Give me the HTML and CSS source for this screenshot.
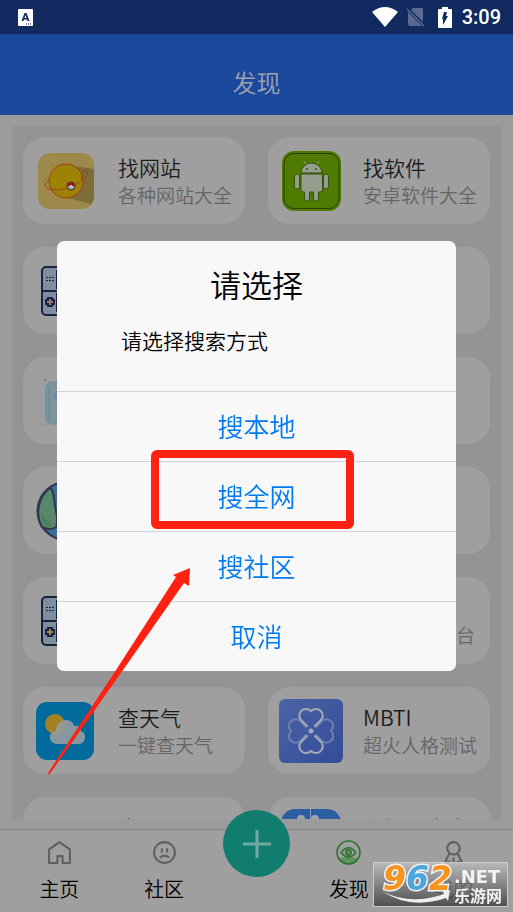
FILE: index.html
```html
<!DOCTYPE html>
<html lang="zh-CN">
<head>
    <meta charset="UTF-8">
    <meta name="viewport" content="width=device-width, initial-scale=1">
    <title>发现</title>
    <link rel="stylesheet" href="styles.css">
</head>
<body>
<div class="statusbar">
    <svg class="status_app" width="16" height="17" viewBox="0 0 16 17">
        <rect width="15" height="17" rx="1" fill="#fff"/>
        <path d="M3.500 12L6.500 4H8.500L11.500 12H9.500L9 10.500H6L5.500 12ZM6.500 9H8.500L7.500 6Z" fill="#112a5f" fill-rule="evenodd"/>
        <path d="M8 15H14" stroke="#112a5f" stroke-width="1" stroke-dasharray="1 1"/>
    </svg>
    <svg width="26" height="20" viewBox="0 0 26 20">
        <path d="M0 5Q13 -5 26 5L13 20Z" fill="#fff"/>
    </svg>
    <svg class="status_sim" width="20" height="20" viewBox="0 0 20 20">
        <path d="M7 1H16Q17 1 17 2V15L5 3ZM2 5L16 19H4Q2 19 2 17Z" fill="#5a6b92"/>
        <path d="M1 2L18 19" stroke="#5a6b92" stroke-width="1.500"/>
    </svg>
    <svg class="status_battery" width="14" height="21" viewBox="0 0 14 21">
        <path d="M4 0H10V2H13Q14 2 14 3V20Q14 21 13 21H1Q0 21 0 20V3Q0 2 1 2H4Z" fill="#fff"/>
        <path d="M6 5H9L8 9H10L5 18V12H4Z" fill="#112a5f"/>
    </svg>
    <span class="time">3:09</span>
</div>

<header class="header">
    <h1>发现</h1>
</header>

<main class="content">
    <div class="panel">
        <a class="card" href="#">
            <svg class="card_icon" viewBox="0 0 64 64">
                <rect x="4" y="4" width="56" height="56" rx="12" fill="#9d8a4b"/>
                <path d="M40 17L60 20V48Q60 52 57 55L34 49Z" fill="#7e6c39"/>
                <circle cx="32" cy="32" r="17" fill="#9d8305" stroke="#9f401d" stroke-width="1"/>
                <path d="M48 31C46 24 50 20 53 22C56 26 49 31 42 35C35 40 24 42 16 40C11 40 9 33 15 32" fill="none" stroke="#9f401d" stroke-width="1"/>
                <circle cx="37" cy="37" r="4" fill="#b0b0b0" stroke="#3c2020" stroke-width="1"/>
                <path d="M33 37A4 4 0 0 1 41 37Z" fill="#8f2222"/>
                <circle cx="37" cy="37" r="1" fill="#ddd"/>
            </svg>
            <span class="card_text">
                <span class="card_title">找网站</span>
                <span class="card_desc">各种网站大全</span>
            </span>
        </a>
        <a class="card" href="#">
            <svg class="card_icon" viewBox="0 0 64 64">
                <rect x="3" y="2" width="59" height="60" rx="12" fill="#4f7c00"/>
                <rect x="5" y="4.500" width="55" height="55" rx="10" fill="none" stroke="#243f00" stroke-width="1"/>
                <g fill="#969c8e" stroke="#33530a" stroke-width="1">
                    <path d="M25 12L28 17M40 12L37 17" stroke="#969c8e"/>
                    <path d="M22 24A10.500 10 0 0 1 43 24Z"/>
                    <path d="M22 25H43.500V41Q43.500 43 41 43H39.500V50Q39 52 37 52Q35 52 34.500 50V43H30.500V50Q30 52 28 52Q26 52 25.500 50V43H24Q22 43 22 41Z"/>
                    <rect x="15.500" y="25" width="5" height="15" rx="2.500"/>
                    <rect x="44.500" y="25" width="5" height="15" rx="2.500"/>
                </g>
                <circle cx="28" cy="20" r="1" fill="#33530a"/>
                <circle cx="37" cy="20" r="1" fill="#33530a"/>
            </svg>
            <span class="card_text">
                <span class="card_title">找软件</span>
                <span class="card_desc">安卓软件大全</span>
            </span>
        </a>

        <a class="card" href="#">
            <svg class="card_icon" viewBox="0 0 64 64">
                <g stroke="#1d2145" stroke-width="2">
                    <rect x="8" y="8" width="48" height="48" rx="4" fill="#7d8f9d"/>
                    <path d="M8 32H56"/>
                    <rect x="23" y="12" width="29" height="17" fill="#66788a"/>
                    <rect x="23" y="35" width="29" height="17" fill="#66788a"/>
                    <path d="M14 39H18V41H20V45H18V47H14V45H12V41H14Z" fill="#94806a"/>
                </g>
                <path d="M12 18.500H20M12 21.500H20" stroke="#1d2145" stroke-dasharray="2 1"/>
            </svg>
        </a>
        <a class="card" href="#"></a>

        <a class="card" href="#">
            <svg class="card_icon" viewBox="0 0 64 64">
                <rect x="12" y="13" width="40" height="42" rx="6" fill="#80939d" stroke="#6688a0"/>
                <path d="M15 17V51" stroke="#718b9a" stroke-width="2"/>
                <path d="M20 27L28 38M20 27L25 22" fill="none" stroke="#668ca3" stroke-width="2"/>
                <path d="M5 55H14" stroke="#84939b"/>
                <circle cx="11" cy="11" r="1" fill="#747474"/>
            </svg>
        </a>
        <a class="card" href="#"></a>

        <a class="card" href="#">
            <svg class="card_icon" viewBox="0 0 64 64">
                <circle cx="32.500" cy="32" r="29" fill="#3e6d96" stroke="#343650" stroke-width="2"/>
                <path d="M16 9C20 11 20 20 21 27C22 34 25 40 22 48C18 51 12 50 8 48C1 35 4 18 16 9Z" fill="#58886a" stroke="#343650" stroke-width="2"/>
                <path d="M7 35Q11 37 12 41Q18 42 18 47Q12 48 9 45Z" fill="#4d7d5d"/>
            </svg>
        </a>
        <a class="card" href="#"></a>

        <a class="card" href="#">
            <svg class="card_icon" viewBox="0 0 64 64">
                <g stroke="#16233b" stroke-width="2">
                    <rect x="8" y="8" width="48" height="48" rx="4" fill="#7d8f9d"/>
                    <path d="M8 32H56"/>
                    <rect x="23" y="12" width="29" height="17" fill="#66788a"/>
                    <rect x="23" y="35" width="29" height="17" fill="#66788a"/>
                    <path d="M14 39H18V41H20V45H18V47H14V45H12V41H14Z" fill="#a18b4c"/>
                </g>
                <path d="M12 18.500H20M12 21.500H20" stroke="#16233b" stroke-dasharray="2 1"/>
            </svg>
        </a>
        <a class="card card_right" href="#">
            <span class="card_text">
                <span class="card_title"></span>
                <span class="card_desc">台</span>
            </span>
        </a>

        <a class="card" href="#">
            <svg class="card_icon" viewBox="0 0 64 64">
                <rect x="2" y="3" width="58" height="58" rx="11" fill="#006a9d"/>
                <circle cx="21" cy="25" r="10" fill="#a38223"/>
                <path d="M24 45C14 45 13 33 22 32C22 19 38 18 40 27C45 26 47 29 47 32C54 35 51 45 45 45Z" fill="#8797a0"/>
                <path d="M22 32C22 27 25 23 30 22Q33 30 24 35Q21 36 19 34Z" fill="#9a9b88"/>
            </svg>
            <span class="card_text">
                <span class="card_title">查天气</span>
                <span class="card_desc">一键查天气</span>
            </span>
        </a>
        <a class="card" href="#">
            <svg class="card_icon" viewBox="0 0 64 64">
                <defs>
                    <linearGradient id="mbti" x1="0" y1="0" x2="1" y2="1">
                        <stop offset="0" stop-color="#4b64a4"/>
                        <stop offset="1" stop-color="#344b99"/>
                    </linearGradient>
                    <path id="petal" d="M28 27L22 21C18 16 22 10 27 10Q30 10 32 12Q34 10 37 10C42 10 46 16 42 21L36 27" fill="none" stroke-width="2" stroke-linecap="round"/>
                </defs>
                <rect width="64" height="64" rx="6" fill="url(#mbti)"/>
                <g stroke="#7080b0">
                    <use href="#petal" transform="rotate(90 32 32)"/>
                    <use href="#petal" transform="rotate(-90 32 32)"/>
                </g>
                <g stroke="#a5a9b8">
                    <use href="#petal"/>
                    <use href="#petal" transform="rotate(180 32 32)"/>
                </g>
                <circle cx="32" cy="32" r="2.500" fill="#a5a9b8"/>
            </svg>
            <span class="card_text">
                <span class="card_title">MBTI</span>
                <span class="card_desc">超火人格测试</span>
            </span>
        </a>

        <a class="card" href="#">
            <span class="card_icon"></span>
            <span class="card_text">
                <span class="card_title">去豆</span>
                <span class="card_desc"></span>
            </span>
        </a>
        <a class="card" href="#">
            <svg class="card_icon" viewBox="0 0 64 64">
                <rect x="2" y="0" width="60" height="60" rx="14" fill="#2c5ea3"/>
                <path d="M31.500 0V60" stroke="#8e9db3"/>
                <circle cx="22" cy="10" r="4" fill="#a0a5ac"/>
                <circle cx="36" cy="10" r="4" fill="#a0a5ac"/>
            </svg>
            <span class="card_text">
                <span class="card_title">小知识大全</span>
                <span class="card_desc"></span>
            </span>
        </a>
    </div>
</main>

<nav class="tabbar">
    <a class="tab" href="#">
        <svg class="tab_icon" viewBox="0 0 24 24">
            <path d="M2 9L12 2L22 9V22H15V15.500H10V22H2Z" fill="none" stroke="#606060" stroke-width="2" stroke-linejoin="round"/>
        </svg>
        <span>主页</span>
    </a>
    <a class="tab" href="#">
        <svg class="tab_icon" viewBox="0 0 24 24" fill="none" stroke="#606060" stroke-width="2">
            <circle cx="12" cy="12" r="10"/>
            <path d="M9.500 8V12M14.500 8V12"/>
            <path d="M7.500 17Q12 13 16.500 17"/>
        </svg>
        <span>社区</span>
    </a>
    <button class="add_button" aria-label="发布">
        <svg width="28" height="28" viewBox="0 0 28 28">
            <path d="M14 0V28M0 14H28" stroke="#6fa99f" stroke-width="3"/>
        </svg>
    </button>
    <a class="tab" href="#">
        <svg class="tab_icon" viewBox="0 0 24 24">
            <path d="M2 17H22Q18 24 12 24Q6 24 2 17Z" fill="#5d925d"/>
            <g fill="none" stroke="#2b702e" stroke-width="1.500">
                <circle cx="12" cy="12" r="11"/>
                <path d="M5 12Q12 3 19 12Q12 21 5 12Z"/>
                <circle cx="12" cy="12" r="2.500"/>
            </g>
            <circle cx="12" cy="12" r="1" fill="#2b702e"/>
        </svg>
        <span>发现</span>
    </a>
    <a class="tab" href="#">
        <svg class="tab_icon" viewBox="0 0 24 24" fill="none" stroke="#606060" stroke-width="2">
            <circle cx="12" cy="8" r="6"/>
            <path d="M8 13L4 21H9M16 13L20 21H15M12 17V22" stroke-linejoin="round"/>
        </svg>
        <span>我的</span>
    </a>
</nav>

<div class="dialog_wrap">
    <div class="dialog" role="dialog" aria-labelledby="dialog_title">
        <div class="dialog_head">
            <h2 id="dialog_title">请选择</h2>
            <p>请选择搜索方式</p>
        </div>
        <button class="dialog_button">搜本地</button>
        <button class="dialog_button marked">搜全网</button>
        <button class="dialog_button">搜社区</button>
        <button class="dialog_button">取消</button>
        <svg class="arrow" width="143" height="207" viewBox="0 0 143 207">
            <path d="M142 0L141 18L136 15L75 102L1 207L0 205L68 102L128 9L125 7Z" fill="#ff2112"/>
        </svg>
    </div>
</div>

<div class="badge">
    <svg class="badge_swoosh" width="68" height="14" viewBox="0 0 68 14">
        <path d="M0 1Q28 16 62 4L61 1L68 0L66 11L64 8Q28 20 0 1Z" fill="#eee"/>
    </svg>
    <span class="badge_number"><span>9</span><span class="blue">6</span><span>2</span></span>
    <span class="badge_side">
        <span class="badge_net">.NET</span>
        <span class="badge_name">乐游网</span>
    </span>
</div>
</body>
</html>
```

FILE: styles.css
```css
* {
    box-sizing: border-box;
}

body {
    margin: 0;
    height: 100vh;
    display: flex;
    flex-direction: column;
    overflow: hidden;
    background: #9b9b9b;
    font-family: "Noto Sans CJK SC", sans-serif;
    font-weight: 350;
}

a {
    color: inherit;
    text-decoration: none;
}

button {
    border: 0;
    padding: 0;
    font-family: inherit;
    font-weight: inherit;
    cursor: pointer;
}

.statusbar {
    display: flex;
    align-items: center;
    height: 34px;
    padding: 0 12px 0 18px;
    background: #112a5f;
    color: #fff;
}

.status_app {
    margin-right: auto;
}

.status_sim {
    margin-left: 8px;
}

.status_battery {
    margin: 0 10px 0 12px;
}

.time {
    font-family: Roboto, sans-serif;
    font-size: 20px;
    font-weight: 500;
}

.header {
    height: 81px;
    padding-top: 16px;
    background: #1a499e;
    color: #9fa3aa;
    text-align: center;
}

.header h1 {
    margin: 0;
    font-size: 24px;
    font-weight: inherit;
    line-height: 64px;
}

.content {
    flex: 1;
    min-height: 0;
    display: flex;
    padding: 11px 12px 10px;
}

.panel {
    flex: 1;
    display: grid;
    grid-template-columns: 1fr 1fr;
    grid-auto-rows: 87px;
    gap: 23px;
    padding: 11px;
    overflow: hidden;
    background: #949494;
}

.card {
    display: flex;
    align-items: center;
    gap: 20px;
    padding: 0 11px;
    border-radius: 22px;
    background: #9f9f9f;
    white-space: nowrap;
}

.card_right {
    justify-content: flex-end;
    padding-right: 15px;
}

.card_icon {
    flex: none;
    width: 64px;
    height: 64px;
}

.card_text {
    display: flex;
    flex-direction: column;
}

.card_title {
    height: 28px;
    font-size: 21px;
    line-height: 28px;
    color: #1c1c1c;
}

.card_desc {
    height: 28px;
    font-size: 19px;
    line-height: 28px;
    color: #666;
}

.tabbar {
    display: grid;
    grid-template-columns: 1fr 1fr 80px 1fr 1fr;
    height: 83px;
    padding: 0 7px;
    border-top: 1px solid #828282;
    background: #9f9f9f;
    color: #000;
}

.tab {
    display: flex;
    flex-direction: column;
    align-items: center;
    gap: 10px;
    padding-top: 10px;
    font-size: 20px;
    line-height: 28px;
}

.tab_icon {
    width: 25px;
    height: 25px;
}

.add_button {
    display: flex;
    align-items: center;
    justify-content: center;
    justify-self: center;
    width: 67px;
    height: 67px;
    margin-top: -20px;
    border-radius: 50%;
    background: #107d6e;
}

.dialog_wrap {
    position: fixed;
    inset: 0;
    display: flex;
    align-items: center;
    justify-content: center;
}

.dialog {
    position: relative;
    width: 77.8%;
    border-radius: 7px;
    background: #f8f8f8;
}

.dialog_head {
    height: 150px;
    padding: 19px 64px 0;
}

.dialog_head h2 {
    margin: 0;
    font-size: 31px;
    font-weight: inherit;
    line-height: 48px;
    text-align: center;
}

.dialog_head p {
    margin: 18px 0 0;
    font-size: 21px;
    line-height: 28px;
}

.dialog_button {
    position: relative;
    display: block;
    width: 100%;
    height: 70px;
    padding-bottom: 2px;
    border-top: 1px solid #d3d3d5;
    background: none;
    color: #007aef;
    font-size: 26px;
}

/* red frame round the option to tap */
.marked::after {
    content: "";
    position: absolute;
    top: -12px;
    bottom: 2px;
    left: 23.5%;
    right: 25.5%;
    border: 8px solid #ff2112;
    border-radius: 6px;
}

.arrow {
    position: absolute;
    top: 327px;
    left: -9px;
    pointer-events: none;
}

.badge {
    position: fixed;
    right: 5px;
    bottom: 5px;
    display: flex;
    gap: 2px;
    width: 135px;
    height: 45px;
    padding-left: 9px;
    border: 1px solid #ccc;
    background: linear-gradient(rgba(190, 190, 190, 0.8), rgba(60, 60, 60, 0.8));
    color: #f2f2f2;
    font-weight: 700;
}

.badge_swoosh {
    position: absolute;
    left: 8px;
    bottom: 2px;
}

.badge_number {
    font-family: "DejaVu Sans", sans-serif;
    font-size: 33px;
    font-style: italic;
    line-height: 32px;
    color: #f7941e;
    -webkit-text-stroke: 3px #f2f2f2;
    paint-order: stroke fill;
}

.badge_number .blue {
    color: #4aa6dc;
}

.badge_side {
    display: flex;
    flex-direction: column;
}

.badge_net {
    font-family: "DejaVu Sans", sans-serif;
    font-size: 18px;
    line-height: 28px;
}

.badge_name {
    font-size: 16px;
    line-height: 8px;
}
```
